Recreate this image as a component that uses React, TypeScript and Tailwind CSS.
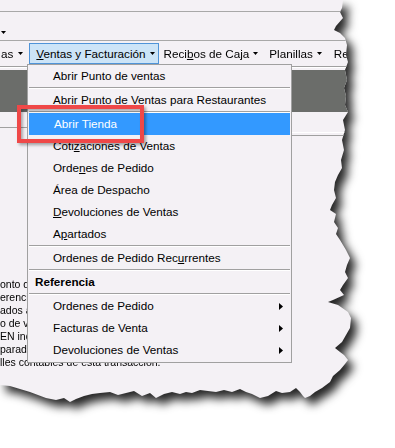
import React from "react";

const EDGE: [number, number][] = [
  [343, 0], [342, 8], [340, 12], [343, 18], [336, 26], [334, 30], [340, 33], [345, 38], [347, 45],
  [346, 55], [348, 62], [345, 70], [347, 80], [344, 88], [346, 96], [345, 105], [348, 112], [343, 120],
  [345, 130], [342, 140], [344, 150], [341, 160], [342, 168], [338, 175], [335, 182], [334, 190],
  [336, 198], [332, 205], [330, 210], [336, 214], [334, 222], [338, 228], [336, 234], [340, 240],
  [346, 250], [350, 258], [347, 265], [345, 272], [348, 278], [343, 285], [340, 290], [344, 295],
  [333, 300], [328, 302], [338, 305], [348, 312], [351, 318], [350, 328], [346, 335], [342, 342],
  [335, 348], [340, 352], [344, 355], [348, 360], [345, 364], [340, 370], [333, 376], [330, 382],
  [322, 388], [315, 392], [310, 396], [305, 398], [303, 396], [300, 392], [296, 388], [290, 392],
  [282, 393], [276, 391], [268, 396], [260, 398], [252, 394], [246, 392], [240, 389], [232, 392],
  [224, 390], [216, 392], [208, 391], [200, 390], [192, 393], [186, 392], [180, 394], [172, 392],
  [164, 394], [156, 398], [150, 393], [142, 396], [134, 391], [126, 393], [118, 395], [110, 392],
  [100, 393], [92, 394], [84, 396], [76, 399], [70, 402], [64, 398], [56, 400], [46, 398], [38, 395],
  [30, 392], [20, 389], [10, 386], [0, 385],
];

const clipPath = `polygon(0px 0px, ${EDGE.map(([x, y]) => `${x}px ${y}px`).join(", ")})`;

const font = { fontFamily: '"Liberation Sans", Arial, sans-serif' };

function Down() {
  return (
    <svg width="5" height="3" viewBox="0 0 5 3" className="block shrink-0">
      <polygon points="0,0 5,0 2.5,3" fill="#000" />
    </svg>
  );
}

function Right() {
  return (
    <svg width="4" height="7" viewBox="0 0 4 7" className="block shrink-0">
      <polygon points="0,0 4,3.5 0,7" fill="#000" />
    </svg>
  );
}

function Sep() {
  return (
    <div className="mx-[1px] flex flex-col">
      <div className="h-px bg-[#a0a0a0]" />
      <div className="h-px bg-white" />
    </div>
  );
}

function Item({ children, active, sub }: { children: React.ReactNode; active?: boolean; sub?: boolean }) {
  return (
    <div
      className={`flex h-[22px] items-center pl-[25px] pr-[8px] ${active ? "bg-[#3399ff] text-white" : "text-black"}`}
    >
      <span className="flex-1 whitespace-nowrap">{children}</span>
      {sub && <Right />}
    </div>
  );
}

export default function App() {
  const hidden = ["onto de", "erencia", "ados a", "o de ve", "EN ind", "parado"];
  return (
    <div className="relative h-[448px] w-[395px] overflow-hidden bg-white" style={font}>
      <div className="h-[412px] w-[368px] drop-shadow-[6px_7px_5px_rgba(0,0,0,0.85)]">
        <div className="relative h-[405px] w-[355px] bg-[#f4f1f5]" style={{ clipPath }}>
          {/* top rows */}
          <div className="h-[11px]" />
          <div className="h-px bg-[#a8a8a8]" />
          <div className="flex h-[28px] items-end pb-[6px] pl-[1px]">
            <Down />
          </div>
          <div className="h-px bg-[#a8a8a8]" />
          {/* menubar */}
          <div className="flex h-[25px] items-start whitespace-nowrap pt-[2px] text-[11.7px] leading-none text-black">
            <div className="flex h-[21px] shrink-0 items-center gap-[5px] pl-[1px] pr-[6px]">
              <span>as</span>
              <Down />
            </div>
            <div className="flex h-[21px] shrink-0 items-center gap-[4px] border border-[#4f94d8] bg-[#cce4f7] pl-[6px] pr-[3px]">
              <span>
                <u>V</u>entas y Facturación
              </span>
              <Down />
            </div>
            <div className="flex h-[21px] shrink-0 items-center gap-[4px] pl-[5px] pr-[6px]">
              <span>
                Reci<u>b</u>os de Caja
              </span>
              <Down />
            </div>
            <div className="flex h-[21px] shrink-0 items-center gap-[4px] pl-[5px] pr-[6px]">
              <span>Planillas</span>
              <Down />
            </div>
            <div className="flex h-[21px] shrink-0 items-center pl-[6px]">
              <span>Re</span>
            </div>
          </div>
          <div className="h-px bg-[#a0a0a0]" />
          <div className="h-px bg-white" />
          <div className="h-[2px]" />
          <div className="h-[42px] bg-[#6b6d6a]" />
          <div className="flex h-[25px]">
            <div className="w-[27px]">
              <div className="h-[16px] border-b border-[#a0a0a0]" />
            </div>
            <div className="flex-1">
              <div className="h-[21px] border-b border-white" />
              <div className="h-[2px]" />
              <div className="h-px bg-[#a0a0a0]" />
            </div>
          </div>
          <div className="h-[141px]" />
          <div className="flex flex-col text-[10.5px] leading-[13px] text-black">
            {hidden.map((l) => (
              <div key={l} className="w-[27px] overflow-hidden whitespace-nowrap">
                {l}
              </div>
            ))}
            <div className="whitespace-nowrap">lles contables de esta transacción.</div>
          </div>

          {/* red highlight box */}
          <div className="absolute left-[17px] top-[105px] z-20 h-[38px] w-[127px] border-[4px] border-[#ef4848] shadow-[2px_2px_3px_rgba(0,0,0,0.35),inset_2px_2px_3px_rgba(0,0,0,0.3)]" />

          {/* dropdown menu */}
          <div className="absolute left-[27px] top-[64px] z-10 w-[265px] border border-[#a0a0a0] bg-[#f4f1f5] pb-[1px] text-[11.7px] leading-none">
            <Item>Abrir Punto de ventas</Item>
            <Sep />
            <Item>Abrir Punto de Ventas para Restaurantes</Item>
            <Sep />
            <div className="mx-[1px]">
              <Item active>Abrir Tienda</Item>
            </div>
            <Item>
              Coti<u>z</u>aciones de Ventas
            </Item>
            <Item>
              Orde<u>n</u>es de Pedido
            </Item>
            <Item>Área de Despacho</Item>
            <Item>
              <u>D</u>evoluciones de Ventas
            </Item>
            <Item>
              A<u>p</u>artados
            </Item>
            <Sep />
            <Item>
              Ordenes de Pedido Rec<u>u</u>rrentes
            </Item>
            <Sep />
            <div className="flex h-[22px] items-center pl-[7px] font-bold">Referencia</div>
            <Sep />
            <Item sub>Ordenes de Pedido</Item>
            <Item sub>Facturas de Venta</Item>
            <Item sub>Devoluciones de Ventas</Item>
          </div>
        </div>
      </div>
    </div>
  );
}
